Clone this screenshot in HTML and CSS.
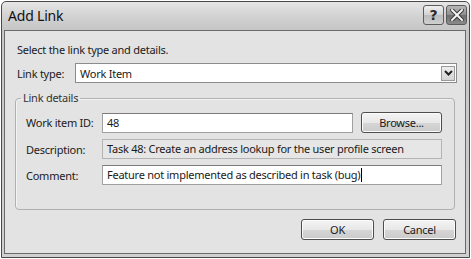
FILE: index.html
```html
<!DOCTYPE html>
<html>

<head>
  <title>Add Link</title>
  <link rel="stylesheet" href="styles.css">
</head>

<body>
  <div class="window">
    <div class="titlebar">
      <span class="title">Add Link</span>
      <span class="capbtn help">?</span>
      <span class="capbtn close">
        <svg width="14" height="12" viewBox="0 0 14 12">
          <path d="M2 1 L12 11 M12 1 L2 11" stroke="#3a3a3a" stroke-width="4" stroke-linecap="square" fill="none"/>
          <path d="M2 1 L12 11 M12 1 L2 11" stroke="#f4f4f4" stroke-width="2" stroke-linecap="square" fill="none"/>
        </svg>
      </span>
    </div>
    <div class="client">
      <div class="intro">Select the link type and details.</div>
      <div class="typerow">
        <label class="typelabel">Link type:</label>
        <div class="combo">
          <span class="combotext">Work Item</span>
          <span class="arrow">
            <svg width="9" height="6" viewBox="0 0 9 6">
              <path d="M1 1 L4.5 4.5 L8 1" stroke="#222" stroke-width="2" fill="none"/>
            </svg>
          </span>
        </div>
      </div>
      <fieldset class="group">
        <legend>Link details</legend>
        <div class="row first">
          <label class="rowlabel">Work item ID:</label>
          <div class="field short">48</div>
          <button class="btn browse">Browse...</button>
        </div>
        <div class="row">
          <label class="rowlabel">Description:</label>
          <div class="field readonly">Task 48: Create an address lookup for the user profile screen</div>
        </div>
        <div class="row last">
          <label class="rowlabel">Comment:</label>
          <div class="field">Feature not implemented as described in task (bug)<span class="caret"></span></div>
        </div>
      </fieldset>
      <div class="buttons">
        <button class="btn">OK</button>
        <button class="btn">Cancel</button>
      </div>
    </div>
  </div>
</body>

</html>
```

FILE: styles.css
```css
body {
  margin: 0;
  background: #ffffff;
  font-family: "Noto Sans", "Open Sans", sans-serif;
  font-size: 11px;
  letter-spacing: -0.25px;
  color: #1a1a1a;
}
.window {
  width: 469px;
  height: 257px;
  margin: 1px 0 0 1px;
  border: 1px solid #4a4a4a;
  border-radius: 5px 5px 0 0;
  background: linear-gradient(#e6e6e6, #d2d2d2 14px, #c6c6c6 28px, #d0d0d0);
  box-sizing: border-box;
  padding: 0 3px 3px 2px;
  display: flex;
  flex-direction: column;
}
.titlebar {
  height: 28px;
  display: flex;
  align-items: center;
  padding-left: 4px;
}
.title {
  flex: 1;
  font-size: 14px;
  letter-spacing: -0.2px;
  color: #111;
  margin-top: -2px;
}
.capbtn {
  width: 19px;
  height: 18px;
  border: 1px solid #5c5c5c;
  border-radius: 3px;
  margin-top: -2px;
  display: flex;
  align-items: center;
  justify-content: center;
}
.help {
  background: linear-gradient(#f0f0f0, #d2d2d2 50%, #bcbcbc 51%, #cfcfcf);
  font-family: "DejaVu Sans", sans-serif;
  font-weight: bold;
  font-size: 14px;
  color: #2a2a2a;
  margin-right: 2px;
}
.close {
  background: linear-gradient(#b8b8b8, #8e8e8e 50%, #707070 51%, #8a8a8a);
  margin-right: -1px;
}
.client {
  flex: 1;
  background: #e3e3e3;
  border: 1px solid #6a6a6a;
  padding: 11px 8px 0 10px;
}
.intro {
  margin-left: 2px;
  line-height: 16px;
}
.typerow {
  display: flex;
  align-items: center;
  margin-top: 5px;
  margin-left: 2px;
}
.typelabel {
  width: 58px;
}
.combo {
  flex: 1;
  height: 20px;
  box-sizing: border-box;
  background: #fff;
  border: 1px solid #8c8c8c;
  display: flex;
  align-items: center;
  padding: 0 1px 0 4px;
}
.combotext {
  flex: 1;
}
.arrow {
  width: 14px;
  height: 15px;
  background: linear-gradient(#eeeeee, #d4d4d4);
  border: 1px solid #9a9a9a;
  box-sizing: border-box;
  display: flex;
  align-items: center;
  justify-content: center;
}
.group {
  margin: 7px 0 0 0;
  width: 440px;
  box-sizing: border-box;
  border: 1px solid #b0b0b0;
  border-radius: 4px;
  box-shadow: inset 1px 1px 0 #f4f4f4;
  padding: 6px 10px 24px 10px;
}
.group legend {
  padding: 0 2px;
  margin-left: -5px;
  color: #333;
  line-height: 16px;
}
.row {
  display: flex;
  align-items: center;
  margin-top: 6px;
}
.row.first {
  margin-top: 0;
  margin-bottom: 3px;
}
.rowlabel {
  width: 76px;
}
.field {
  width: 340px;
  height: 20px;
  box-sizing: border-box;
  background: #fff;
  border: 1px solid #a0a0a0;
  border-top-color: #7c7c7c;
  padding: 0 4px;
  line-height: 18px;
  white-space: nowrap;
}
.field.short {
  width: 251px;
}
.field.readonly {
  background: #e6e6e6;
  border-color: #b4b4b4;
}
.caret {
  display: inline-block;
  width: 1px;
  height: 14px;
  background: #000;
  vertical-align: -3px;
  margin-left: 1px;
}
.btn {
  font-family: inherit;
  font-size: 11px;
  letter-spacing: -0.25px;
  color: #1a1a1a;
  height: 21px;
  border: 1px solid #4e4e4e;
  border-radius: 3px;
  background: linear-gradient(#f4f4f4, #e8e8e8 50%, #d6d6d6 51%, #cbcbcb);
  box-shadow: inset 0 0 0 1px #fbfbfb;
  padding: 0;
}
.browse {
  width: 81px;
  margin-left: 8px;
}
.buttons {
  display: flex;
  justify-content: flex-end;
  gap: 9px;
  margin-top: 9px;
  margin-right: 1px;
}
.buttons .btn {
  width: 73px;
}
```
